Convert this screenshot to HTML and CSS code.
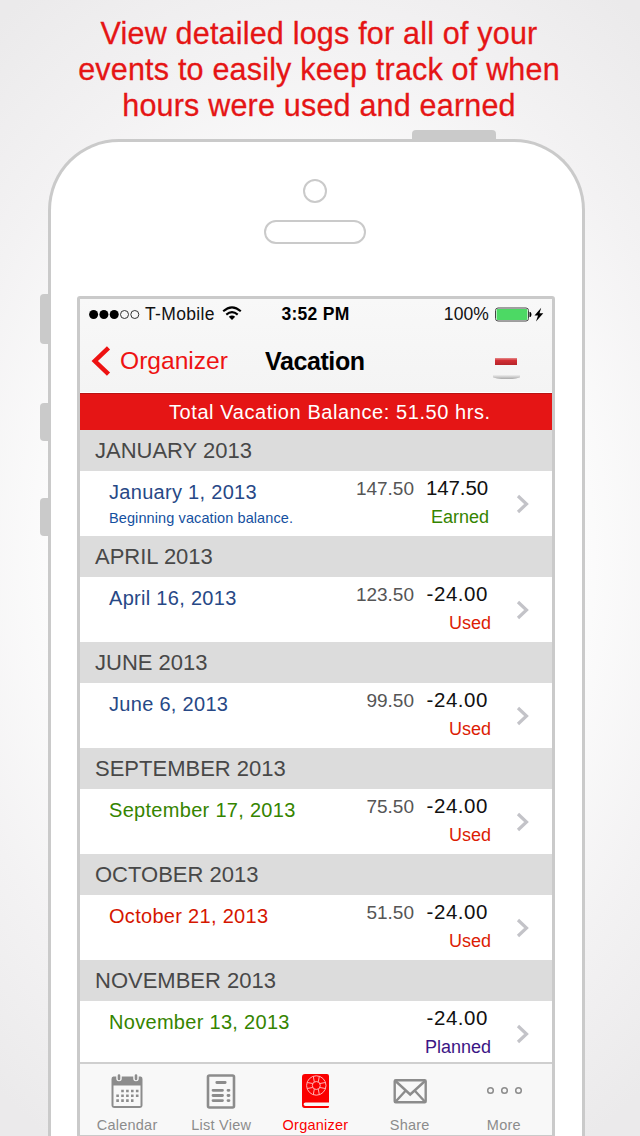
FILE: index.html
```
<!DOCTYPE html>
<html lang="en">
<head>
<meta charset="utf-8">
<title>Vacation</title>
<link rel="stylesheet" href="styles.css">
</head>
<body>
<h1 class="headline"><span>View detailed logs for all of your</span><span>events to easily keep track of when</span><span>hours were used and earned</span></h1>
<div class="phone">
  <i class="key power"></i><i class="key mute"></i><i class="key up"></i><i class="key down"></i>
  <div class="face"><i class="camera"></i><i class="speaker"></i></div>
  <div class="screen">
    <div class="top">
      <div class="status">
        <div class="carrier">
          <svg width="52" height="12" viewBox="0 0 52 12"><g fill="#000"><circle cx="5.600" cy="5.500" r="4.500"/><circle cx="15.900" cy="5.500" r="4.500"/><circle cx="26.200" cy="5.500" r="4.500"/></g><g fill="none" stroke="#333" stroke-width="1"><circle cx="36.500" cy="5.500" r="4"/><circle cx="46.800" cy="5.500" r="4"/></g></svg>
          <span class="net">T-Mobile</span>
          <svg class="wifi" width="20" height="15" viewBox="0 0 20 15"><g fill="none" stroke="#000" stroke-width="2.1"><path d="M1.2 5.3Q10-2.6 18.8 5.3"/><path d="M4.3 8.6Q10 3.6 15.7 8.6"/></g><path d="M6.8 10.8Q10 8 13.2 10.8L10 14Z"/></svg>
        </div>
        <b class="time">3:52 PM</b>
        <div class="power-info"><span class="pct">100%</span>
          <svg width="52" height="16" viewBox="0 0 52 16"><rect x="1.500" y="1" width="33" height="13" rx="2.500" fill="#fff" stroke="#444"/><rect x="2.600" y="2.100" width="30.800" height="10.800" rx="1" fill="#4cd964"/><path d="M35.500 5H36.500Q38.500 7.500 36.500 10H35.500Z"/><path d="M47.200 .8L40.500 8.500H44L42 14.500L49.300 6.300H45.500Z"/></svg>
        </div>
      </div>
      <div class="nav">
        <div class="back"><svg width="20" height="30" viewBox="0 0 20 30"><path d="M17.5 1.8L3.8 15L17.5 28.2" fill="none" stroke="#ee1212" stroke-width="4.500"/></svg><span>Organizer</span></div>
        <b class="title">Vacation</b>
        <div class="minus"><i class="bar"></i><i class="shade"></i></div>
      </div>
    </div>
    <div class="banner"><span>Total Vacation Balance: 51.50 hrs.</span></div>
    <div class="list">
      <h2 class="month">JANUARY 2013</h2>
      <div class="row"><div class="info blue"><div class="date">January 1, 2013</div><div class="note">Beginning vacation balance.</div></div><div class="total">147.50</div><div class="change"><div class="hours plus">147.50</div><div class="kind earned">Earned</div></div><svg class="chev" viewBox="0 0 14 20"><path d="M2 2L10.5 10L2 18"/></svg></div>
      <h2 class="month">APRIL 2013</h2>
      <div class="row"><div class="info blue"><div class="date">April 16, 2013</div></div><div class="total">123.50</div><div class="change"><div class="hours">-24.00</div><div class="kind used">Used</div></div><svg class="chev" viewBox="0 0 14 20"><path d="M2 2L10.5 10L2 18"/></svg></div>
      <h2 class="month">JUNE 2013</h2>
      <div class="row"><div class="info blue"><div class="date">June 6, 2013</div></div><div class="total">99.50</div><div class="change"><div class="hours">-24.00</div><div class="kind used">Used</div></div><svg class="chev" viewBox="0 0 14 20"><path d="M2 2L10.5 10L2 18"/></svg></div>
      <h2 class="month">SEPTEMBER 2013</h2>
      <div class="row"><div class="info green"><div class="date">September 17, 2013</div></div><div class="total">75.50</div><div class="change"><div class="hours">-24.00</div><div class="kind used">Used</div></div><svg class="chev" viewBox="0 0 14 20"><path d="M2 2L10.5 10L2 18"/></svg></div>
      <h2 class="month">OCTOBER 2013</h2>
      <div class="row"><div class="info red"><div class="date">October 21, 2013</div></div><div class="total">51.50</div><div class="change"><div class="hours">-24.00</div><div class="kind used">Used</div></div><svg class="chev" viewBox="0 0 14 20"><path d="M2 2L10.5 10L2 18"/></svg></div>
      <h2 class="month">NOVEMBER 2013</h2>
      <div class="row"><div class="info green"><div class="date">November 13, 2013</div></div><div class="total"></div><div class="change"><div class="hours">-24.00</div><div class="kind planned">Planned</div></div><svg class="chev" viewBox="0 0 14 20"><path d="M2 2L10.5 10L2 18"/></svg></div>
    </div>
    <div class="tabs">
      <div class="tab"><svg viewBox="0 0 40 40"><path d="M6.3 5.5H33.7Q35.5 5.5 35.5 8V34Q35.5 37 32.5 37H7.5Q4.500 37 4.500 34V8Q4.500 5.500 6.300 5.500Z" fill="#8c8c8c"/><path d="M6.500 14.500H33.500V35H6.500Z" fill="#f8f8f8"/><g stroke="#f8f8f8" stroke-width="5.500" stroke-linecap="round"><path d="M12 4V7.500M29 4V7.500"/></g><g stroke="#8c8c8c" stroke-width="2.600" stroke-linecap="round"><path d="M12 4.500V8M29 4.500V8"/></g><g stroke="#8c8c8c" stroke-width="2.600" stroke-dasharray="2.600 2.300"><path d="M14.200 20H31.500M9.300 24.800H31.500M9.300 29.600H26.500"/></g></svg><span>Calendar</span></div>
      <div class="tab"><svg viewBox="0 0 40 40"><rect x="7" y="4.500" width="26" height="32" rx="1.500" fill="none" stroke="#8c8c8c" stroke-width="2.600"/><g stroke="#8c8c8c" stroke-width="2.800" stroke-linecap="round"><path d="M15.800 11.500H24.200M12 19.300H21.500M12 24.500H21.500M12 29.600H21.500M27 19.300H28M27 24.500H28M27 29.600H28"/></g></svg><span>List View</span></div>
      <div class="tab on"><svg viewBox="0 0 40 40"><path d="M10 3H32Q34 3 34 5V31.500H10.500Q8.600 31.500 8.600 33.200Q8.600 35 10.500 35H34V35.500Q34 37 32.500 37H9.500Q7 37 7 34V6Q7 3 10 3Z" fill="#fa0000"/><g fill="none" stroke="#ffb5b5" stroke-width="1"><circle cx="21.300" cy="14.500" r="9.700"/><circle cx="21.300" cy="14.500" r="4"/><path d="M18.300 5.400L19.300 10.900M24.300 5.400L23.300 10.900M18.300 23.600L19.300 18.100M24.300 23.600L23.300 18.100M12.200 11.500L17.700 12.500M12.200 17.500L17.700 16.500M30.400 11.500L24.900 12.500M30.400 17.500L24.900 16.500"/></g></svg><span>Organizer</span></div>
      <div class="tab"><svg viewBox="0 0 40 40"><g fill="none" stroke="#8c8c8c" stroke-width="2.400"><rect x="4.700" y="9.200" width="31" height="22" rx="1"/><path d="M5.500 10L20.200 23.500L35 10M5.500 30.800L15.800 19.500M35 30.800L24.600 19.500"/></g></svg><span>Share</span></div>
      <div class="tab"><svg viewBox="0 0 40 40"><g fill="none" stroke="#8c8c8c" stroke-width="1.500"><circle cx="6.500" cy="19.500" r="2.800"/><circle cx="20.500" cy="19.500" r="2.800"/><circle cx="34.500" cy="19.500" r="2.800"/></g></svg><span>More</span></div>
    </div>
  </div>
</div>
</body>
</html>
```
FILE: styles.css
```
* { box-sizing: border-box; }
html, body { height: 1136px; overflow: hidden; }
body { margin: 0; font-family: "Liberation Sans", Arial, sans-serif; background: radial-gradient(ellipse 520px 680px at 50% 49%, #fff 0%, #fcfcfc 50%, #f3f2f3 75%, #ebeaeb 100%); }
i { display: block; }
svg { display: block; flex: none; }
.headline { margin: 0; height: 139px; padding: 15px 2px 0 0; font-weight: 400; font-size: 30.5px; line-height: 36px; letter-spacing: .2px; color: #e51515; text-align: center; white-space: nowrap; -webkit-text-stroke: .3px #e51515; }
.headline span { display: block; }
.phone { position: relative; margin-left: 48px; width: 537px; height: 997px; border: 3px solid #cacaca; border-bottom: 0; border-radius: 71px 71px 0 0; background: #fff; display: flex; flex-direction: column; }
.key { position: absolute; background: #cacaca; }
.power { left: 361px; top: -12px; width: 84px; height: 10px; border-radius: 4px 4px 0 0; }
.mute, .up, .down { left: -11px; width: 9px; border-radius: 4px 0 0 4px; }
.mute { top: 152px; height: 50px; }
.up { top: 261px; height: 38px; }
.down { top: 356px; height: 38px; }
.face { height: 154px; flex: none; padding: 37px 3px 0 0; display: flex; flex-direction: column; align-items: center; }
.camera { width: 24px; height: 24px; border: 2px solid #cacaca; border-radius: 50%; margin-bottom: 17px; }
.speaker { width: 102px; height: 24px; border: 2px solid #cacaca; border-radius: 12px; }
.screen { margin-left: 26px; width: 478px; height: 840px; flex: none; border: 3px solid #cacaca; border-bottom-width: 1px; border-radius: 3px 3px 0 0; display: flex; flex-direction: column; overflow: hidden; }
.top { height: 94px; flex: none; background: linear-gradient(#f8f8f8, #f4f4f4); border-bottom: 1px solid #fff; }
.status { height: 31px; display: grid; grid-template-columns: 1fr auto 1fr; align-items: center; font-size: 17.5px; color: #111; white-space: nowrap; }
.carrier { display: flex; align-items: center; padding-left: 8px; }
.net { margin-left: 5px; letter-spacing: .35px; }
.wifi { margin: 0 0 2px 7px; }
.time { font-size: 17.5px; color: #000; letter-spacing: .3px; margin-right: 1px; }
.power-info { display: flex; align-items: center; justify-content: flex-end; padding-right: 6px; }
.pct { margin-right: 5px; letter-spacing: .1px; }
.nav { height: 62px; display: flex; align-items: center; }
.back { display: flex; align-items: center; padding-left: 11px; width: 185px; color: #ee1212; font-size: 24.6px; }
.back span { margin-left: 9px; }
.title { font-size: 25px; letter-spacing: -.4px; color: #000; width: 227px; }
.minus { width: 28px; display: flex; flex-direction: column; align-items: center; padding-top: 14px; }
.bar { width: 22px; height: 7px; background: linear-gradient(#e58a8a, #d32f35 35%, #b52329); }
.shade { margin-top: 10px; width: 27px; height: 4px; border-radius: 0 0 50% 50%; background: linear-gradient(#eee, #aaa); }
.banner { height: 37px; flex: none; border-top: 1px solid #b81414; background: #e51515; color: #fff; font-size: 20px; line-height: 36px; padding-left: 89px; letter-spacing: .58px; white-space: nowrap; }
.list { flex: 1; min-height: 0; overflow: hidden; background: #fff; }
.month { margin: 0; height: 41px; background: #dcdcdc; color: #484848; font-weight: 400; font-size: 22px; line-height: 42px; padding-left: 15px; }
.row { height: 65px; display: flex; white-space: nowrap; }
.info { width: 234px; padding: 9px 0 0 29px; }
.date { font-size: 20px; line-height: 24px; letter-spacing: .3px; }
.note { font-size: 14.5px; line-height: 17px; margin-top: 6px; color: #1450a0; letter-spacing: .1px; }
.blue { color: #274886; }
.green { color: #358400; }
.red { color: #d51600; }
.total { width: 100px; padding-top: 6px; text-align: right; font-size: 19px; line-height: 24px; color: #555; }
.change { width: 77px; padding-top: 4px; text-align: right; color: #111; }
.hours { font-size: 20.5px; line-height: 25px; padding-right: 3px; letter-spacing: .55px; }
.plus { letter-spacing: -.1px; }
.kind { font-size: 18px; line-height: 21px; margin-top: 7px; }
.earned { color: #358400; padding-right: 2px; }
.used { color: #dc1c04; }
.planned { color: #3b1585; }
.chev { width: 14px; height: 20px; margin: 23px 0 0 25px; fill: none; stroke: #c3c3c8; stroke-width: 3.2px; }
.tabs { height: 73px; flex: none; border-top: 2px solid #cfcfcf; background: #f8f8f8; padding-right: 1px; display: grid; grid-template-columns: repeat(5, 1fr); }
.tab { display: flex; flex-direction: column; align-items: center; padding-top: 7px; color: #8c8c8c; font-size: 14.5px; letter-spacing: .25px; white-space: nowrap; }
.tab svg { width: 40px; height: 40px; }
.tab span { line-height: 17px; margin-top: 6px; }
.on { color: #fa0000; }
```
